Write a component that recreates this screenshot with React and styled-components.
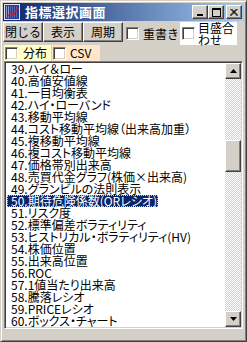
import React from 'react';
import styled, { createGlobalStyle } from 'styled-components';

const Global = createGlobalStyle`
  html, body { margin: 0; padding: 0; background: #d4d0c8; }
  body { font-family: "Noto Sans CJK JP", "Liberation Sans", sans-serif; font-size: 12px; }
  * { box-sizing: border-box; }
`;

const items = [
  '39.ハイ＆ロー',
  '40.高値安値線',
  '41.一目均衡表',
  '42.ハイ・ローバンド',
  '43.移動平均線',
  '44.コスト移動平均線（出来高加重）',
  '45.複移動平均線',
  '46.複コスト移動平均線',
  '47.価格帯別出来高',
  '48.売買代金グラフ(株価×出来高)',
  '49.グランビルの法則表示',
  '50.期待危険係数(ORレシオ)',
  '51.リスク度',
  '52.標準偏差ボラティリティ',
  '53.ヒストリカル・ボラティリティ(HV)',
  '54.株価位置',
  '55.出来高位置',
  '56.ROC',
  '57.1値当たり出来高',
  '58.騰落レシオ',
  '59.PRICEレシオ',
  '60.ボックス・チャート',
];
const selectedIndex = 11;

const raised = `
  border: 1px solid;
  border-color: #fff #404040 #404040 #fff;
  box-shadow: inset -1px -1px #808080, inset 1px 1px #d4d0c8;
`;
const sunken = `
  border: 1px solid;
  border-color: #808080 #fff #fff #808080;
  box-shadow: inset 1px 1px #404040, inset -1px -1px #d4d0c8;
`;

const Window = styled.div`
  width: 247px;
  height: 342px;
  background: #d4d0c8;
  border: 1px solid;
  border-color: #d4d0c8 #404040 #404040 #d4d0c8;
  box-shadow: inset 1px 1px #fff, inset -1px -1px #808080;
  padding: 2px;
  display: flex;
  flex-direction: column;
  overflow: hidden;
`;

const TitleBar = styled.div`
  height: 18px;
  display: flex;
  align-items: center;
  padding: 0 2px 0 1px;
  background: linear-gradient(to right, #0a246a, #a6caf0);
`;

const TitleText = styled.span`
  color: #fff;
  font-weight: bold;
  font-size: 13px;
  line-height: 18px;
  margin-left: 5px;
  flex: 1;
  letter-spacing: 0.5px;
`;

const CapButton = styled.div`
  width: 16px;
  height: 14px;
  background: #d4d0c8;
  ${raised}
  margin-left: ${p => p.gap || 0}px;
  display: flex;
  align-items: center;
  justify-content: center;
`;

const Toolbar = styled.div`
  margin-top: 1px;
  height: 23px;
  display: flex;
  align-items: flex-start;
`;

const PushButton = styled.div`
  width: 40px;
  height: 20px;
  ${raised}
  background: #d4d0c8;
  display: flex;
  align-items: center;
  justify-content: center;
  font-size: 12px;
  line-height: 12px;
  color: #000;
`;

const Check = styled.div`
  width: 13px;
  height: 13px;
  flex: none;
  background: #fff;
  ${sunken}
`;

const CheckField = styled.div`
  display: flex;
  align-items: ${p => p.top ? 'flex-start' : 'center'};
  background: ${p => p.bg || 'transparent'};
  width: ${p => p.w}px;
  height: ${p => p.h}px;
  padding-left: ${p => p.pl || 0}px;
  margin-left: ${p => p.ml || 0}px;
  flex: none;
`;

const CheckText = styled.span`
  margin-left: ${p => p.gap || 4}px;
  font-size: 12px;
  line-height: 12px;
  width: ${p => p.w ? p.w + 'px' : 'auto'};
  color: #000;
`;

const OptionRow = styled.div`
  height: 16px;
  display: flex;
  align-items: stretch;
  padding-left: 1px;
`;

const ListBox = styled.div`
  margin: 0 1px 0 1px;
  height: 268px;
  background: #fff;
  ${sunken}
  padding: 1px;
  display: flex;
`;

const Items = styled.div`
  flex: 1;
  padding-top: 0;
  font-feature-settings: "palt";
`;

const Item = styled.div`
  height: 12px;
  line-height: 12px;
  padding-left: 1px;
  white-space: nowrap;
`;

const ItemLabel = styled.span`
  display: inline-block;
  height: 12px;
  padding: 0 1px 0 4px;
  color: ${p => p.sel ? '#fff' : '#000'};
  background: ${p => p.sel ? '#0a246a' : 'transparent'};
  outline: ${p => p.sel ? '1px dotted #e8d070' : 'none'};
  outline-offset: -1px;
`;

const ScrollBar = styled.div`
  width: 16px;
  display: flex;
  flex-direction: column;
  background-color: #fff;
  background-image: repeating-conic-gradient(#d4d0c8 0 25%, #fff 0 50%);
  background-size: 2px 2px;
`;

const ArrowButton = styled.div`
  width: 16px;
  height: 16px;
  flex: none;
  background: #d4d0c8;
  ${raised}
  display: flex;
  align-items: center;
  justify-content: center;
`;

const Track = styled.div`
  flex: 1;
  padding-top: ${p => p.offset}px;
`;

const Thumb = styled.div`
  width: 16px;
  height: 32px;
  background: #d4d0c8;
  ${raised}
`;

const AppIcon = () => (
  <svg width="16" height="16" viewBox="0 0 16 16">
    <rect x="0" y="0" width="16" height="16" fill="#dfe6f5" />
    <rect x="1" y="1" width="14" height="14" fill="#203c98" />
    <path d="M2 3h3M2 5h3M2 7h3M2 9h3M2 11h3M2 13h3" stroke="#fff" strokeWidth="1" strokeDasharray="1 1" />
    <path d="M6 3h8M6 5h8M6 7h8M6 9h8M6 11h8M6 13h8" stroke="#7f95d8" strokeWidth="1" strokeDasharray="1 1" />
    <path d="M3 13 L7 9 L9 11 L14 4" stroke="#e01818" strokeWidth="1.4" fill="none" />
  </svg>
);

const MinGlyph = () => (
  <svg width="8" height="7" viewBox="0 0 8 7"><rect x="1" y="5" width="6" height="2" fill="#000" /></svg>
);
const MaxGlyph = () => (
  <svg width="9" height="9" viewBox="0 0 9 9">
    <rect x="0.5" y="0.5" width="8" height="8" fill="none" stroke="#000" />
    <rect x="0" y="0" width="9" height="2" fill="#000" />
  </svg>
);
const CloseGlyph = () => (
  <svg width="8" height="7" viewBox="0 0 8 7">
    <path d="M0.5 0 L7.5 7 M1.5 0 L8 6.5 M7.5 0 L0.5 7 M6.5 0 L0 6.5" stroke="#000" strokeWidth="1" />
  </svg>
);
const Triangle = ({ down }) => (
  <svg width="7" height="4" viewBox="0 0 7 4">
    <path d={down ? 'M0 0 H7 L3.5 4 Z' : 'M0 4 H7 L3.5 0 Z'} fill="#000" />
  </svg>
);

const App = () => {
  return (
    <Window>
      <Global />
      <TitleBar>
        <AppIcon />
        <TitleText>指標選択画面</TitleText>
        <CapButton><MinGlyph /></CapButton>
        <CapButton><MaxGlyph /></CapButton>
        <CapButton gap={2}><CloseGlyph /></CapButton>
      </TitleBar>

      <Toolbar>
        <PushButton>閉じる</PushButton>
        <PushButton>表示</PushButton>
        <PushButton>周期</PushButton>
        <CheckField w={54} h={23} ml={3}>
          <Check />
          <CheckText gap={4}>重書き</CheckText>
        </CheckField>
        <CheckField w={57} h={23} pl={2} bg="#fff">
          <Check />
          <CheckText gap={3} w={37}>目盛合わせ</CheckText>
        </CheckField>
      </Toolbar>

      <OptionRow>
        <CheckField w={47} h={16} pl={1} bg="#ffffcc">
          <Check />
          <CheckText gap={5}>分布</CheckText>
        </CheckField>
        <CheckField w={48} h={16} pl={1} ml={1} bg="#ffe6c8">
          <Check />
          <CheckText gap={4}>CSV</CheckText>
        </CheckField>
      </OptionRow>

      <ListBox>
        <Items>
          {items.map((t, i) => (
            <Item key={t}>
              <ItemLabel sel={i === selectedIndex}>{t}</ItemLabel>
            </Item>
          ))}
        </Items>
        <ScrollBar>
          <ArrowButton><Triangle /></ArrowButton>
          <Track offset={61}><Thumb /></Track>
          <ArrowButton><Triangle down /></ArrowButton>
        </ScrollBar>
      </ListBox>
    </Window>
  );
};

export default App;
